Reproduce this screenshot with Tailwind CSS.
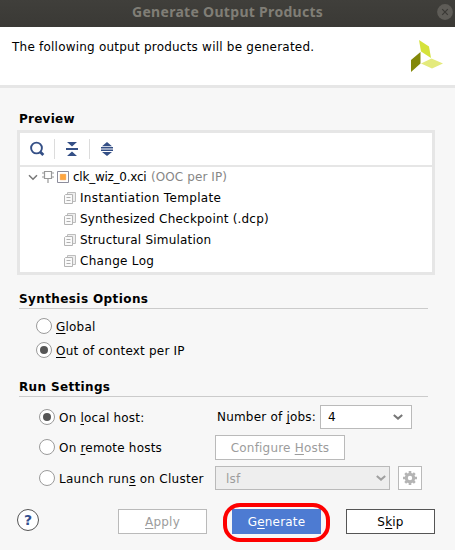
<!DOCTYPE html>
<html lang="en">
<head>
<meta charset="utf-8">
<title>Generate Output Products</title>
<script src="https://cdn.jsdelivr.net/npm/@tailwindcss/browser@4"></script>
</head>
<body class="bg-[#f7f7f7]">
<svg class="hidden">
  <symbol id="doc" viewBox="0 0 12 12"><path d="M3.500 2.500v-2h8v9h-3" fill="#eee" stroke="#bdbdbd"/><path d="M.5 3.500 1.500 2.500h7v9h-8z" fill="#fafafa" stroke="#b4b4b4"/><path d="M2.500 5.500h4M2.500 8.500h4" stroke="#b0b0b0"/></symbol>
  <symbol id="chev" viewBox="0 0 10 6"><path d="M.8.900 5 4.600 9.200.9" fill="none" stroke="currentColor" stroke-width="2"/></symbol>
</svg>
<div class="flex h-[550px] w-[455px] flex-col overflow-hidden bg-[#f7f7f7] font-['DejaVu_Sans',sans-serif] text-[12px] leading-[14px] tracking-[0.2px] whitespace-nowrap text-black">
  <header class="flex h-[27px] items-center bg-linear-to-b from-[#403f3b] to-[#3a3935] pl-[132px]">
    <h1 class="w-[305px] pb-[3px] font-['Noto_Sans',sans-serif] text-[14px] leading-[24px] font-bold tracking-[0.3px] text-[#807e76]">Generate Output Products</h1>
    <svg class="mb-[3px] size-4 shrink-0" viewBox="0 0 16 16"><circle cx="8" cy="8" r="7.900" fill="#5e5c57"/><path d="m5.200 5.200 5.600 5.600m0-5.600-5.600 5.600" stroke="#3a3935" stroke-width="1.200"/></svg>
  </header>
  <section class="flex h-[61px] justify-between border-b-[3px] border-[#e6e6e6] bg-white pt-[13px] pr-[12px] pl-[12px]">
    <p class="tracking-[0.22px]">The following output products will be generated.</p>
    <svg class="h-[32px] w-[32px]" viewBox="0 0 32 32"><path d="M8 0 18 6.500 20 18 10 11.500z" fill="#d5e23b"/><path d="M0 20 9.500 12v11.500L0 32z" fill="#838808"/><path d="m10 23.500 10.500-5L32 23.500l-11 5z" fill="#e4ea7c"/></svg>
  </section>

  <h2 class="mt-[24px] ml-[19px] font-bold tracking-[0.25px]">Preview</h2>
  <section class="mt-[4px] ml-[17px] h-[145px] w-[418px] border-[3px] border-[#e6e6e6] bg-white">
    <div class="flex h-[34px] items-center border-b-2 border-[#e6e6e6] pl-[10px] text-[#344f86]">
      <svg class="h-4 w-[16px]" viewBox="0 0 16 16"><circle cx="6.500" cy="7" r="5.400" fill="none" stroke="currentColor" stroke-width="1.900"/><path d="m10.300 11 3 3" stroke="currentColor" stroke-width="2.800"/></svg>
      <span class="ml-[8px] h-5 w-px bg-[#dcdcdc]"></span>
      <svg class="ml-[11px] h-[14px] w-[12px]" viewBox="0 0 12 14"><path d="M1 0h10L6 4.500zM0 6h12v2H0zM1 14h10L6 9.500z" fill="currentColor"/></svg>
      <span class="ml-[11px] h-5 w-px bg-[#dcdcdc]"></span>
      <svg class="ml-[11px] h-[14px] w-[12px]" viewBox="0 0 12 14"><path d="m6 0 5 4.200H1zM0 5.100h12v1.500H0zM0 7.600h12v1.500H0zM6 14l5-4H1z" fill="currentColor"/></svg>
    </div>
    <div class="flex h-[21px] items-center pl-[8px]">
      <svg class="h-[7px] w-[10px]" viewBox="0 0 10 7"><path d="M1 1.200 5 5.200 9 1.200" fill="none" stroke="#777" stroke-width="1.500"/></svg>
      <svg class="mb-px ml-[4px] h-[12px] w-[12px]" viewBox="0 0 12 12"><path d="M2.500.500h7v7h-7zM0 2h2.500M0 6h2.500M9.500 2H12M9.500 6H12M6 7.500V12" fill="none" stroke="#999" stroke-width="1.200"/></svg>
      <svg class="mb-px ml-[3px] h-[12px] w-[12px]" viewBox="0 0 12 12"><path d="M.5.500h11v11H.500z" fill="#fff" stroke="#8d8d9b"/><path d="M3.250 3.250h5.500v5.500h-5.500z" fill="#ffa63d" stroke="#f08c2a" stroke-width=".5"/></svg>
      <span class="ml-[4px] pb-[2px] tracking-[-0.25px]">clk_wiz_0.xci <span class="ml-[1px] tracking-[0.1px] text-[#868686]">(OOC per IP)</span></span>
    </div>
    <div class="flex h-[21px] items-center gap-[4px] pl-[44px]"><svg class="mb-px size-3"><use href="#doc"/></svg><span class="pb-[2px] tracking-[0.33px]">Instantiation Template</span></div>
    <div class="flex h-[21px] items-center gap-[4px] pl-[44px]"><svg class="mb-px size-3"><use href="#doc"/></svg><span class="pb-[2px]">Synthesized Checkpoint (.dcp)</span></div>
    <div class="flex h-[21px] items-center gap-[4px] pl-[44px]"><svg class="mb-px size-3"><use href="#doc"/></svg><span class="pb-[2px]">Structural Simulation</span></div>
    <div class="flex h-[21px] items-center gap-[4px] pl-[44px]"><svg class="mb-px size-3"><use href="#doc"/></svg><span class="pb-[2px] tracking-[0.3px]">Change Log</span></div>
  </section>

  <section class="mt-[17px] ml-[19px] h-[84px] w-[409px]">
    <h2 class="h-[17px] border-b border-[#cbcbcb] font-bold tracking-[0.4px]">Synthesis Options</h2>
    <div class="mt-[5px] flex h-6 items-center gap-[4px] pl-[17px]">
      <span class="size-4 rounded-full border border-[#9b9b9b] bg-white"></span>
      <span class="pt-[2px]"><u class="underline-offset-2">G</u>lobal</span>
    </div>
    <div class="flex h-6 items-center gap-[4px] pl-[17px]">
      <span class="flex size-4 items-center justify-center rounded-full border border-[#9b9b9b] bg-white"><span class="size-2 rounded-full bg-[#555]"></span></span>
      <span class="pt-[2px]"><u class="underline-offset-2">O</u>ut of context per IP</span>
    </div>
  </section>

  <section class="mt-[4px] ml-[19px] h-[111px] w-[409px]">
    <h2 class="h-[17px] border-b border-[#cbcbcb] font-bold tracking-[0.35px]">Run Settings</h2>
    <div class="mt-[8px] flex h-6 items-center pl-[20px]">
      <span class="flex size-4 items-center justify-center rounded-full border border-[#9b9b9b] bg-white"><span class="size-2 rounded-full bg-[#555]"></span></span>
      <span class="ml-[4px] w-[158px] pt-[2px]">On <u class="underline-offset-2">l</u>ocal host:</span>
      <span class="w-[103px]">Number of <u class="underline-offset-2">j</u>obs:</span>
      <span class="flex h-6 w-[92px] shrink-0 items-center justify-between border border-[#bababa] bg-white pr-[8px] pl-[7px]">4<svg class="h-[6px] w-[10px] text-[#777]"><use href="#chev"/></svg></span>
    </div>
    <div class="mt-[6px] flex h-[25px] items-center pl-[20px]">
      <span class="mb-px size-4 rounded-full border border-[#9b9b9b] bg-white"></span>
      <span class="ml-[4px] w-[156px] pt-px">On <u class="underline-offset-2">r</u>emote hosts</span>
      <span class="flex h-[25px] w-[130px] items-center justify-center border border-[#bababa] bg-white pt-px text-[#9c9c9c]"><span>Configure <u class="underline-offset-2">H</u>osts</span></span>
    </div>
    <div class="mt-[6px] flex h-6 items-center pl-[20px]">
      <span class="size-4 rounded-full border border-[#9b9b9b] bg-white"></span>
      <span class="ml-[4px] w-[156px] pt-[2px] tracking-[0.27px]">Launch run<u class="underline-offset-2">s</u> on Cluster</span>
      <span class="flex h-6 w-[175px] shrink-0 items-center justify-between border border-[#bababa] bg-[#eee] pr-[3px] pl-[10px] text-[#9c9c9c]"><span class="pt-px">lsf</span><svg class="h-[6px] w-[10px] text-[#a0a0a0]"><use href="#chev"/></svg></span>
      <span class="ml-[8px] flex size-6 shrink-0 items-center justify-center border border-[#bababa] bg-white">
        <svg class="size-[14px]" viewBox="-7 -7 14 14"><circle r="3.700" fill="none" stroke="#b4b4b4" stroke-width="3"/><path d="M0-7V-4M0 7V4M-7 0h3M7 0H4M-4.800-4.800-3-3M4.800 4.800 3 3M-4.800 4.800-3 3M4.800-4.800 3-3" stroke="#b4b4b4" stroke-width="2.600"/></svg>
      </span>
    </div>
  </section>

  <footer class="mt-[18px] flex h-[27px] items-start pl-[17px]">
    <span class="flex size-[22px] items-center justify-center rounded-full border border-[#555] bg-white text-[14px] font-bold tracking-normal text-[#34508f]">?</span>
    <span class="ml-[79px] flex h-[25px] w-[89px] items-center justify-center border border-[#bababa] bg-white pt-px text-[#9c9c9c]"><span><u class="underline-offset-2">A</u>pply</span></span>
    <span class="relative ml-[25px] flex h-[25px] w-[89px] items-center justify-center bg-[#4d7bd2] pt-px text-white"><span>G<u class="underline-offset-2">e</u>nerate</span>
      <span class="absolute -top-[6px] -left-[9px] h-[39px] w-[107px] rounded-[17px] border-4 border-[#fe0000]"></span>
    </span>
    <span class="ml-[25px] flex h-[25px] w-[89px] items-center justify-center border border-[#555] bg-white pt-px"><span>S<u class="underline-offset-2">k</u>ip</span></span>
  </footer>
</div>
</body>
</html>
